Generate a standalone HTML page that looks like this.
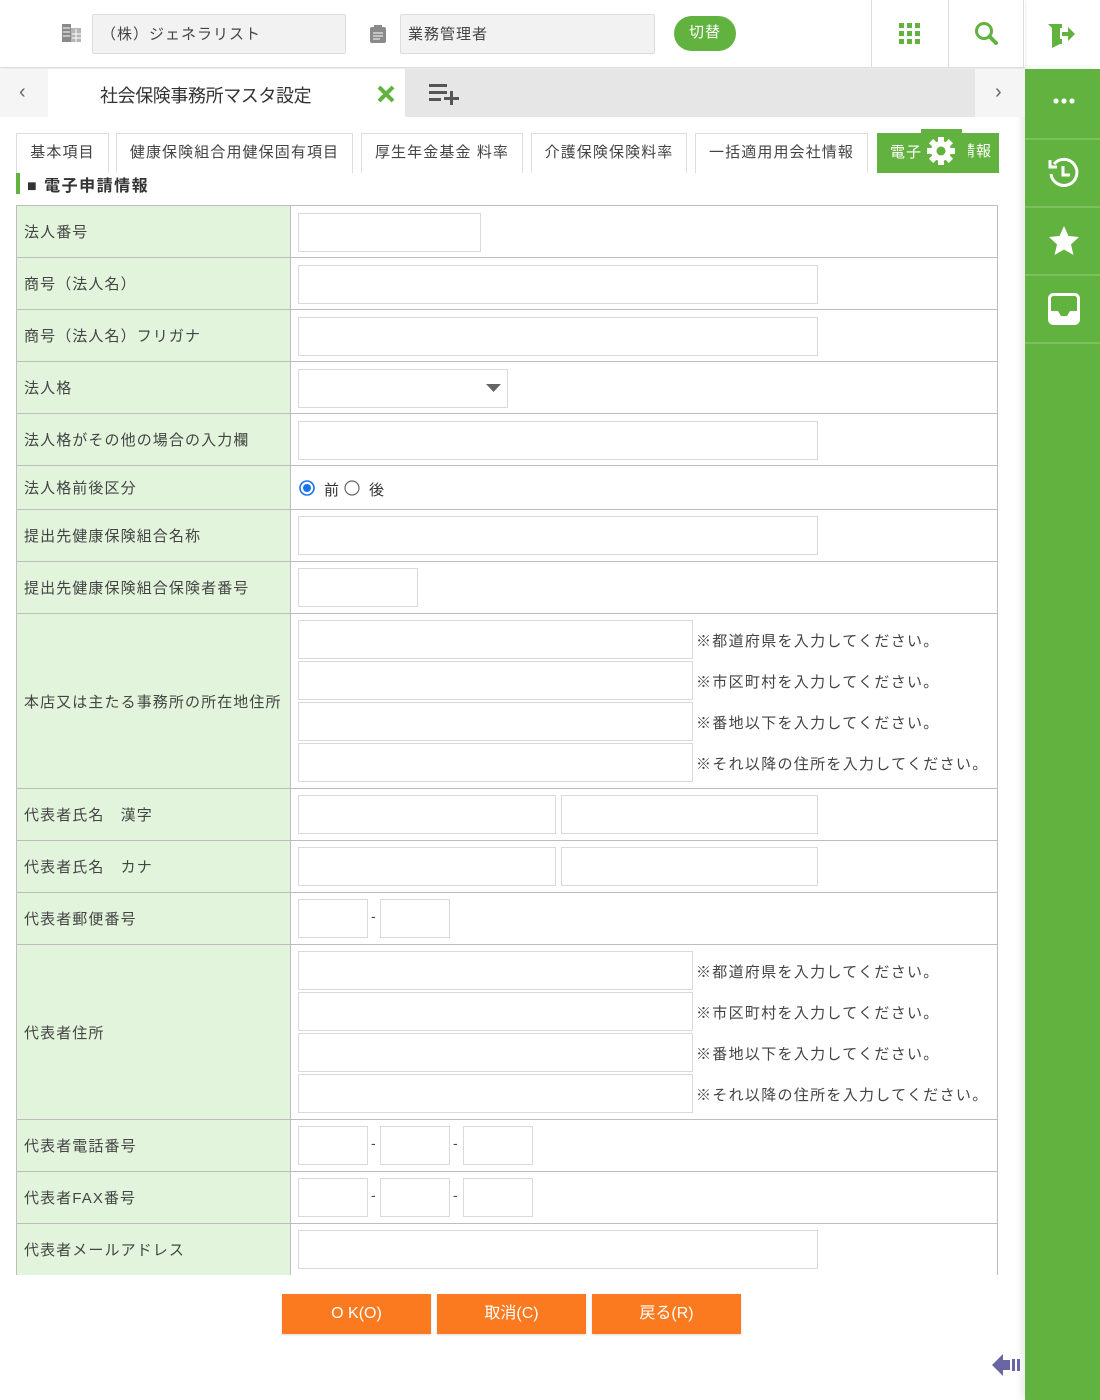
<!DOCTYPE html>
<html><head><meta charset="utf-8"><style>
*{box-sizing:border-box;margin:0;padding:0}
body{width:1100px;height:1400px;position:relative;overflow:hidden;background:#fff;font-family:"Liberation Sans","Noto Sans CJK JP",sans-serif;color:#333;font-size:15px;letter-spacing:1px}
.a{position:absolute}
.in{position:absolute;border:1px solid #d9d9d9;background:#fff;height:39px}
.lbl{position:absolute;left:17px;width:273px;background:#e2f5dc;padding-left:7px;display:flex;align-items:center;font-size:15px;color:#444;letter-spacing:1.1px}
.hl{position:absolute;left:16px;width:982px;height:1px;background:#bdbdbd}
.tab{position:absolute;top:133px;height:40px;border:1px solid #ddd;border-bottom:none;font-size:15px;color:#444;text-align:center;line-height:38px;background:#fff;letter-spacing:1.1px}
.note{position:absolute;left:696px;font-size:15px;color:#444;letter-spacing:1.3px}
.btn{position:absolute;top:1294px;height:40px;width:149px;background:#fb7a1f;color:#fff;text-align:center;line-height:40px;font-size:16px;box-shadow:0 1px 2px rgba(0,0,0,.15);letter-spacing:0}
.dash{position:absolute;font-size:14px;color:#444}
</style></head><body>
<div class="a" style="left:0;top:0;width:1025px;height:68px;background:#fff;border-bottom:1px solid #ddd;box-shadow:0 1px 3px rgba(0,0,0,.12)"></div>
<svg class="a" style="left:62px;top:24px" width="20" height="18"><rect x="0" y="0" width="9" height="18" fill="#8a8a8a"/><rect x="9" y="4" width="10" height="14" fill="#b5b5b5"/><g stroke="#fff" stroke-width="1"><line x1="1" y1="4" x2="8" y2="4"/><line x1="1" y1="8" x2="8" y2="8"/><line x1="1" y1="12" x2="8" y2="12"/><line x1="14" y1="5" x2="14" y2="18"/><line x1="10" y1="10" x2="19" y2="10"/><line x1="10" y1="14" x2="19" y2="14"/></g></svg>
<div class="a" style="left:92px;top:14px;width:254px;height:40px;background:#f2f2f2;border:1px solid #ddd;border-radius:2px;padding:8px 8px;font-size:15px;color:#444">（株）ジェネラリスト</div>
<svg class="a" style="left:370px;top:25px" width="16" height="18"><rect x="0" y="2" width="16" height="16" rx="2" fill="#8a8a8a"/><rect x="4" y="0" width="8" height="4" fill="#8a8a8a"/><g stroke="#fff"><line x1="3" y1="8" x2="13" y2="8"/><line x1="3" y1="11" x2="13" y2="11"/><line x1="3" y1="14" x2="10" y2="14"/></g></svg>
<div class="a" style="left:400px;top:14px;width:255px;height:40px;background:#f2f2f2;border:1px solid #ddd;border-radius:2px;padding:8px 7px;font-size:15px;color:#444">業務管理者</div>
<div class="a" style="left:674px;top:16px;width:62px;height:35px;background:#62b23f;border-radius:18px;color:#fff;text-align:center;line-height:34px;font-size:15px">切替</div>
<div class="a" style="left:871px;top:0;width:1px;height:68px;background:#ddd"></div>
<div class="a" style="left:948px;top:0;width:1px;height:68px;background:#ddd"></div>
<div class="a" style="left:1023px;top:0;width:1px;height:68px;background:#ddd"></div>
<svg class="a" style="left:899px;top:23px" width="21" height="21" fill="#62b23f"><rect x="0" y="0" width="5" height="5"/><rect x="8" y="0" width="5" height="5"/><rect x="16" y="0" width="5" height="5"/><rect x="0" y="8" width="5" height="5"/><rect x="8" y="8" width="5" height="5"/><rect x="16" y="8" width="5" height="5"/><rect x="0" y="16" width="5" height="5"/><rect x="8" y="16" width="5" height="5"/><rect x="16" y="16" width="5" height="5"/></svg>
<svg class="a" style="left:974px;top:21px" width="25" height="25"><circle cx="10" cy="10" r="7.5" fill="none" stroke="#62b23f" stroke-width="3"/><line x1="15.5" y1="15.5" x2="22" y2="22" stroke="#62b23f" stroke-width="4" stroke-linecap="round"/></svg>
<svg class="a" style="left:1048px;top:22px" width="28" height="26" fill="#62b23f"><path d="M0 2h12v20l-8 4V6z"/><rect x="9" y="2" width="5" height="4"/><rect x="9" y="17" width="5" height="5"/><path d="M14 10h6V5l7 7-7 7v-5h-6z"/></svg>
<div class="a" style="left:1025px;top:69px;width:75px;height:1331px;background:#62b23f;box-shadow:-4px 0 6px rgba(0,0,0,.08)"></div>
<div class="a" style="left:1025px;top:138px;width:75px;height:2px;background:#7cc25c"></div>
<div class="a" style="left:1025px;top:206px;width:75px;height:2px;background:#7cc25c"></div>
<div class="a" style="left:1025px;top:274px;width:75px;height:2px;background:#7cc25c"></div>
<div class="a" style="left:1025px;top:342px;width:75px;height:2px;background:#7cc25c"></div>
<svg class="a" style="left:1053px;top:97px" width="22" height="8" fill="#fff"><circle cx="3" cy="4" r="2.6"/><circle cx="11" cy="4" r="2.6"/><circle cx="19" cy="4" r="2.6"/></svg>
<svg class="a" style="left:1046px;top:155px" width="36" height="36" fill="none" stroke="#fff" stroke-width="3"><path d="M8 9 A13 13 0 1 1 5 19"/><path d="M4 5v7h7" /><path d="M17 11v9h7"/></svg>
<svg class="a" style="left:1048px;top:225px" width="32" height="31"><path d="M16 1l4.5 10 10.5 1-8 7.5 2.5 10.5L16 24.5 6.5 30 9 19.5 1 12l10.5-1z" fill="#fff"/></svg>
<svg class="a" style="left:1048px;top:293px" width="32" height="32"><rect x="1.5" y="1.5" width="29" height="29" rx="4" fill="none" stroke="#fff" stroke-width="3"/><path d="M2 18h8l3 5h6l3-5h8v11H2z" fill="#fff"/></svg>
<div class="a" style="left:0;top:69px;width:1025px;height:48px;background:#f5f5f5"></div>
<div class="a" style="left:48px;top:69px;width:357px;height:48px;background:#fff"></div>
<div class="a" style="left:405px;top:69px;width:570px;height:48px;background:#e6e6e6"></div>
<div class="a" style="left:19px;top:81px;font-size:20px;color:#666">‹</div>
<div class="a" style="left:995px;top:81px;font-size:20px;color:#666">›</div>
<div class="a" style="left:100px;top:82px;font-size:18px;color:#333;letter-spacing:-0.4px">社会保険事務所マスタ設定</div>
<svg class="a" style="left:377px;top:85px" width="18" height="18"><path d="M2 2L16 16M16 2L2 16" stroke="#62b23f" stroke-width="4"/></svg>
<svg class="a" style="left:429px;top:83px" width="32" height="22" fill="#555"><rect x="0" y="1" width="18" height="3"/><rect x="0" y="8" width="18" height="3"/><rect x="0" y="15" width="12" height="3"/><rect x="15" y="14" width="15" height="3"/><rect x="21" y="8" width="3" height="14"/></svg>
<div class="tab" style="left:16px;width:93px">基本項目</div>
<div class="tab" style="left:116px;width:237px">健康保険組合用健保固有項目</div>
<div class="tab" style="left:361px;width:162px">厚生年金基金 料率</div>
<div class="tab" style="left:531px;width:156px">介護保険保険料率</div>
<div class="tab" style="left:695px;width:173px">一括適用用会社情報</div>
<div class="tab" style="left:877px;width:122px;background:#62b23f;border-color:#62b23f;color:#fff;text-align:left;padding-left:12px">電子</div>
<div class="a" style="left:921px;top:129px;width:41px;height:10px;background:#62b23f"></div>
<div class="a" style="left:960px;top:133px;color:#fff;font-size:15px;line-height:38px">請報</div>
<div class="a" style="left:960px;top:133px;width:8px;height:38px;background:#62b23f"></div>
<svg class="a" style="left:926px;top:136px" width="30" height="30" viewBox="0 0 30 30"><g fill="#fff"><circle cx="15" cy="15" r="10"/><g id="t"><rect x="12" y="1" width="6" height="6"/><rect x="12" y="23" width="6" height="6"/><rect x="1" y="12" width="6" height="6"/><rect x="23" y="12" width="6" height="6"/></g><use href="#t" transform="rotate(45 15 15)"/></g><circle cx="15" cy="15" r="4.5" fill="#62b23f"/></svg>
<div class="a" style="left:16px;top:173px;width:4px;height:21px;background:#62b23f"></div>
<div class="a" style="left:27px;top:172px;font-size:16px;font-weight:bold;color:#333;letter-spacing:1.5px">■ 電子申請情報</div>
<div class="a" style="left:16px;top:205px;width:982px;height:1070px;border-left:1px solid #bdbdbd;border-right:1px solid #bdbdbd"></div>
<div class="a" style="left:290px;top:205px;width:1px;height:1070px;background:#bdbdbd"></div>
<div class="lbl" style="top:206px;height:51px">法人番号</div>
<div class="lbl" style="top:258px;height:51px">商号（法人名）</div>
<div class="lbl" style="top:310px;height:51px">商号（法人名）フリガナ</div>
<div class="lbl" style="top:362px;height:51px">法人格</div>
<div class="lbl" style="top:414px;height:51px">法人格がその他の場合の入力欄</div>
<div class="lbl" style="top:466px;height:43px">法人格前後区分</div>
<div class="lbl" style="top:510px;height:51px">提出先健康保険組合名称</div>
<div class="lbl" style="top:562px;height:51px">提出先健康保険組合保険者番号</div>
<div class="lbl" style="top:614px;height:174px">本店又は主たる事務所の所在地住所</div>
<div class="lbl" style="top:789px;height:51px">代表者氏名　漢字</div>
<div class="lbl" style="top:841px;height:51px">代表者氏名　カナ</div>
<div class="lbl" style="top:893px;height:51px">代表者郵便番号</div>
<div class="lbl" style="top:945px;height:174px">代表者住所</div>
<div class="lbl" style="top:1120px;height:51px">代表者電話番号</div>
<div class="lbl" style="top:1172px;height:51px">代表者FAX番号</div>
<div class="lbl" style="top:1224px;height:51px">代表者メールアドレス</div>
<div class="hl" style="top:205px"></div><div class="hl" style="top:257px"></div><div class="hl" style="top:309px"></div><div class="hl" style="top:361px"></div><div class="hl" style="top:413px"></div><div class="hl" style="top:465px"></div><div class="hl" style="top:509px"></div><div class="hl" style="top:561px"></div><div class="hl" style="top:613px"></div><div class="hl" style="top:788px"></div><div class="hl" style="top:840px"></div><div class="hl" style="top:892px"></div><div class="hl" style="top:944px"></div><div class="hl" style="top:1119px"></div><div class="hl" style="top:1171px"></div><div class="hl" style="top:1223px"></div>
<div class="in" style="left:298px;top:213px;width:183px"></div>
<div class="in" style="left:298px;top:265px;width:520px"></div>
<div class="in" style="left:298px;top:317px;width:520px"></div>
<div class="in" style="left:298px;top:369px;width:210px"></div>
<svg class="a" style="left:486px;top:384px" width="15" height="9"><path d="M0 0h15L7.5 8z" fill="#666"/></svg>
<div class="in" style="left:298px;top:421px;width:520px"></div>
<svg class="a" style="left:299px;top:480px" width="16" height="16"><circle cx="8" cy="8" r="7" fill="#fff" stroke="#1a73e8" stroke-width="1.6"/><circle cx="8" cy="8" r="4" fill="#1a73e8"/></svg>
<div class="a" style="left:324px;top:479px;font-size:15px">前</div>
<svg class="a" style="left:344px;top:480px" width="16" height="16"><circle cx="8" cy="8" r="7" fill="#fff" stroke="#666" stroke-width="1.2"/></svg>
<div class="a" style="left:369px;top:479px;font-size:15px">後</div>
<div class="in" style="left:298px;top:516px;width:520px"></div>
<div class="in" style="left:298px;top:568px;width:120px"></div>
<div class="in" style="left:298px;top:620px;width:395px"></div><div class="note" style="top:630px">※都道府県を入力してください。</div>
<div class="in" style="left:298px;top:661px;width:395px"></div><div class="note" style="top:671px">※市区町村を入力してください。</div>
<div class="in" style="left:298px;top:702px;width:395px"></div><div class="note" style="top:712px">※番地以下を入力してください。</div>
<div class="in" style="left:298px;top:743px;width:395px"></div><div class="note" style="top:753px">※それ以降の住所を入力してください。</div>
<div class="in" style="left:298px;top:795px;width:258px"></div><div class="in" style="left:561px;top:795px;width:257px"></div>
<div class="in" style="left:298px;top:847px;width:258px"></div><div class="in" style="left:561px;top:847px;width:257px"></div>
<div class="in" style="left:298px;top:899px;width:70px"></div><div class="dash" style="left:371px;top:908px">-</div><div class="in" style="left:380px;top:899px;width:70px"></div>
<div class="in" style="left:298px;top:951px;width:395px"></div><div class="note" style="top:961px">※都道府県を入力してください。</div>
<div class="in" style="left:298px;top:992px;width:395px"></div><div class="note" style="top:1002px">※市区町村を入力してください。</div>
<div class="in" style="left:298px;top:1033px;width:395px"></div><div class="note" style="top:1043px">※番地以下を入力してください。</div>
<div class="in" style="left:298px;top:1074px;width:395px"></div><div class="note" style="top:1084px">※それ以降の住所を入力してください。</div>
<div class="in" style="left:298px;top:1126px;width:70px"></div><div class="dash" style="left:371px;top:1135px">-</div><div class="in" style="left:380px;top:1126px;width:70px"></div><div class="dash" style="left:453px;top:1135px">-</div><div class="in" style="left:463px;top:1126px;width:70px"></div>
<div class="in" style="left:298px;top:1178px;width:70px"></div><div class="dash" style="left:371px;top:1187px">-</div><div class="in" style="left:380px;top:1178px;width:70px"></div><div class="dash" style="left:453px;top:1187px">-</div><div class="in" style="left:463px;top:1178px;width:70px"></div>
<div class="in" style="left:298px;top:1230px;width:520px"></div>
<div class="btn" style="left:282px">O K(O)</div>
<div class="btn" style="left:437px">取消(C)</div>
<div class="btn" style="left:592px">戻る(R)</div>
<svg class="a" style="left:992px;top:1352px" width="32" height="26" fill="#6a66a3"><path d="M0 13L11 2v6h7v10h-7v6z"/><rect x="20" y="7" width="3" height="12"/><rect x="25" y="7" width="3" height="12"/></svg>
</body></html>
